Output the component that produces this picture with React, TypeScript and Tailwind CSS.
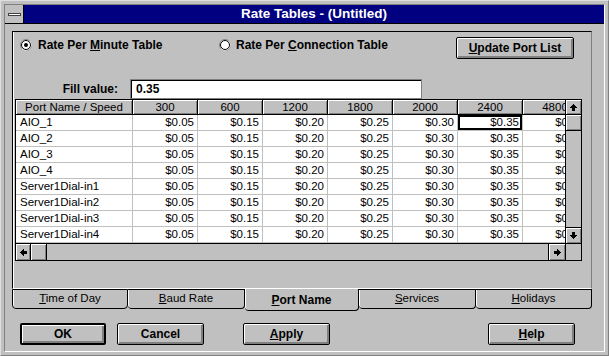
import React from 'react';

const speeds = ['300', '600', '1200', '1800', '2000', '2400', '4800'];
const rates = ['$0.05', '$0.15', '$0.20', '$0.25', '$0.30', '$0.35', '$0.40'];
const ports = [
  'AIO_1',
  'AIO_2',
  'AIO_3',
  'AIO_4',
  'Server1Dial-in1',
  'Server1Dial-in2',
  'Server1Dial-in3',
  'Server1Dial-in4',
];

const tabs = [
  { label: 'Time of Day', w: 'w-[116px]' },
  { label: 'Baud Rate', w: 'w-[117px]' },
  { label: 'Port Name', w: 'w-[114px]', active: true },
  { label: 'Services', w: 'w-[117px]' },
  { label: 'Holidays', w: 'w-[116px]' },
];

// little win3.1 style arrow, points up by default
function Arrow({ rotate = '' }: { rotate?: string }) {
  return (
    <svg width="7" height="7" viewBox="0 0 7 7" className={rotate} shapeRendering="crispEdges">
      <path d="M3 0h1v1h1v1h1v1h1v1h-2v3h-3v-3h-2v-1h1v-1h1v-1h1z" fill="#000" />
    </svg>
  );
}

function Radio({ checked }: { checked?: boolean }) {
  return (
    <svg width="12" height="12" viewBox="0 0 12 12">
      <circle cx="6" cy="6" r="5.5" fill="#fff" stroke="#808080" />
      <path d="M2.2 9.8 A5.4 5.4 0 0 0 9.8 2.2" fill="none" stroke="#fff" strokeWidth="1" />
      <circle cx="6" cy="6" r="4.5" fill="#fff" stroke="#000" />
      {checked && <circle cx="6" cy="6" r="2" fill="#000" />}
    </svg>
  );
}

function WinButton({
  w,
  def,
  children,
}: {
  w: string;
  def?: boolean;
  children: React.ReactNode;
}) {
  return (
    <div
      className={`${w} h-[22px] flex items-center justify-center rounded-[2px] bg-[#c0c0c0] text-[12px] font-bold ${
        def
          ? 'border-2 border-black shadow-[inset_1px_1px_0_#fff,inset_-2px_-2px_0_#808080]'
          : 'border border-black shadow-[inset_1px_1px_0_#fff,inset_-2px_-2px_0_#808080]'
      }`}
    >
      {children}
    </div>
  );
}

const raised = 'bg-[#c0c0c0] shadow-[inset_1px_1px_0_#fff,inset_-1px_-1px_0_#808080]';

export default function App() {
  return (
    <div className="w-[609px] h-[356px] bg-[#c0c0c0] p-[3px] border border-t-[#dfdfdf] border-l-[#dfdfdf] border-r-[#808080] border-b-[#808080] font-['Liberation_Sans',Arial,sans-serif] text-black select-none">
      <div className="h-full flex flex-col border border-t-[#808080] border-l-[#808080] border-r-white border-b-white">
        {/* title bar */}
        <div className="h-[19px] flex border-b border-black shrink-0">
          <div className="w-[19px] border-r border-black bg-[#c0c0c0] flex items-center justify-center">
            <div className="w-[13px] h-[3px] bg-white border border-[#404040]" />
          </div>
          <div className="flex-1 bg-[#000080] text-white font-bold text-[13.5px] leading-none flex items-center justify-center">
            Rate Tables - (Untitled)
          </div>
        </div>

        {/* client */}
        <div className="flex-1 pl-[7px] pt-[7px]">
          <div className="w-[580px] h-[258px] border-t border-l border-r border-b border-t-black border-l-black border-r-[#808080] border-b-white shadow-[inset_1px_0_0_#fff]">
            <div className="mt-[5px] pl-[7px] flex items-start h-[22px]">
              <div className="w-[199px] h-[14px] mt-[1px] flex items-center gap-[6px] text-[12px] font-bold">
                <Radio checked />
                <span>
                  Rate Per <span className="underline">M</span>inute Table
                </span>
              </div>
              <div className="w-[237px] h-[14px] mt-[1px] flex items-center gap-[5px] text-[12px] font-bold">
                <Radio />
                <span>
                  Rate Per <span className="underline">C</span>onnection Table
                </span>
              </div>
              <WinButton w="w-[118px]">
                <span>
                  <span className="underline">U</span>pdate Port List
                </span>
              </WinButton>
            </div>

            <div className="mt-[20px] flex items-center h-[20px]">
              <div className="w-[105px] text-right text-[12px] font-bold">Fill value:</div>
              <div className="ml-[12px] w-[292px] h-[20px] bg-white border border-[#808080] shadow-[inset_1px_1px_0_#000] flex items-center pl-[5px] text-[12px] font-bold">
                0.35
              </div>
            </div>

            {/* grid */}
            <div className="ml-[2px] w-[567px] border border-black flex flex-col">
              <div className="flex">
                <div className="w-[550px] overflow-hidden">
                  <div className="flex w-[572px] h-[15px]">
                    <div className={`w-[117px] shrink-0 border-r border-b border-black text-[11.5px] leading-[14px] text-center ${raised}`}>
                      Port Name / Speed
                    </div>
                    {speeds.map((s) => (
                      <div
                        key={s}
                        className={`w-[65px] shrink-0 border-r border-b border-black text-[11.5px] leading-[14px] text-center ${raised}`}
                      >
                        {s}
                      </div>
                    ))}
                  </div>
                  {ports.map((p, r) => (
                    <div key={p} className="flex w-[572px] h-[16px] bg-white">
                      <div className="w-[117px] shrink-0 border-r border-b border-[#c0c0c0] text-[11.5px] leading-[15px] pl-[4px]">
                        {p}
                      </div>
                      {rates.map((v, c) => (
                        <div
                          key={c}
                          className={`w-[65px] shrink-0 border-r border-b border-[#c0c0c0] text-[11.5px] leading-[15px] text-right pr-[3px] ${
                            r === 0 && c === 5 ? 'shadow-[inset_0_0_0_2px_#000]' : ''
                          }`}
                        >
                          {v}
                        </div>
                      ))}
                    </div>
                  ))}
                </div>
                <div className="w-[16px] border-l border-black flex flex-col bg-[#c0c0c0]">
                  <div className={`h-[15px] border-b border-black flex items-center justify-center ${raised}`}>
                    <Arrow />
                  </div>
                  <div className={`h-[16px] border-b border-black ${raised}`} />
                  <div className="flex-1" />
                  <div className={`h-[16px] border-t border-black flex items-center justify-center ${raised}`}>
                    <Arrow rotate="rotate-180" />
                  </div>
                </div>
              </div>
              <div className="h-[17px] border-t border-black flex bg-[#c0c0c0]">
                <div className={`w-[15px] border-r border-black flex items-center justify-center ${raised}`}>
                  <Arrow rotate="-rotate-90" />
                </div>
                <div className={`w-[16px] border-r border-black ${raised}`} />
                <div className="flex-1" />
                <div className={`w-[17px] border-l border-black flex items-center justify-center ${raised}`}>
                  <Arrow rotate="rotate-90" />
                </div>
                <div className="w-[16px] border-l border-black" />
              </div>
            </div>
          </div>

          {/* tabs */}
          <div className="flex items-start">
            {tabs.map((t, i) => (
              <div
                key={t.label}
                className={`${t.w} flex items-center justify-center rounded-b-[4px] border-r border-b border-black shadow-[inset_1px_0_0_#fff] ${
                  i === 0 ? 'border-l' : ''
                } ${t.active ? 'h-[22px] text-[12px] font-bold' : 'h-[20px] border-t text-[11.5px]'}`}
              >
                <span>
                  <span className="underline">{t.label[0]}</span>
                  {t.label.slice(1)}
                </span>
              </div>
            ))}
          </div>

          {/* buttons */}
          <div className="mt-[12px] flex pl-[8px]">
            <WinButton w="w-[86px]" def>
              OK
            </WinButton>
            <div className="ml-[11px]">
              <WinButton w="w-[87px]">Cancel</WinButton>
            </div>
            <div className="ml-[39px]">
              <WinButton w="w-[87px]">
                <span>
                  <span className="underline">A</span>pply
                </span>
              </WinButton>
            </div>
            <div className="ml-[158px]">
              <WinButton w="w-[87px]">
                <span>
                  <span className="underline">H</span>elp
                </span>
              </WinButton>
            </div>
          </div>
        </div>
      </div>
    </div>
  );
}
